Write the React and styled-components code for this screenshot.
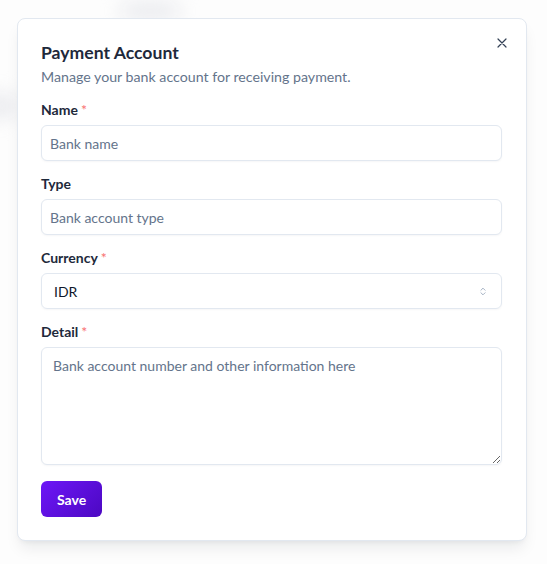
import React from "react";
import styled, { createGlobalStyle } from "styled-components";

const Global = createGlobalStyle`
  html, body { margin: 0; padding: 0; background: #ffffff; }
  body { font-family: Lato, "Noto Sans", sans-serif; color: #0f172a; }
  * { box-sizing: border-box; }
`;

const Page = styled.div`
  position: relative;
  width: 547px;
  height: 564px;
  overflow: hidden;
  background: #fdfdfd;
  padding: 18px 20px 0 17px;
`;

const Blur = styled.div`
  position: absolute;
  border-radius: 20px;
  background: #e9eaee;
  filter: blur(10px);
  left: ${(p) => p.$x}px;
  top: ${(p) => p.$y}px;
  width: ${(p) => p.$w}px;
  height: ${(p) => p.$h}px;
`;

const Card = styled.div`
  position: relative;
  width: 510px;
  background: #ffffff;
  border: 1px solid #e2e8f0;
  border-radius: 8px;
  box-shadow: 0 10px 15px -3px rgba(15, 23, 42, 0.08), 0 4px 6px -4px rgba(15, 23, 42, 0.08);
  padding: 20px 24px 23px 23px;
  display: flex;
  flex-direction: column;
`;

const Close = styled.button`
  position: absolute;
  top: 14px;
  right: 14px;
  width: 20px;
  height: 20px;
  border: none;
  background: transparent;
  padding: 0;
  display: flex;
  align-items: center;
  justify-content: center;
  color: #334155;
  cursor: pointer;
`;

const Title = styled.h2`
  margin: 0;
  font-size: 17.6px;
  line-height: 28px;
  font-weight: 700;
  color: #1e293b;
`;

const Subtitle = styled.p`
  margin: 0;
  font-size: 14.2px;
  line-height: 20px;
  color: #64748b;
`;

const Form = styled.form`
  margin-top: 13px;
  display: flex;
  flex-direction: column;
  gap: 13px;
`;

const Field = styled.div`
  display: flex;
  flex-direction: column;
  gap: 5px;
`;

const Label = styled.label`
  font-size: 14px;
  line-height: 20px;
  font-weight: 700;
  color: #1e293b;
`;

const Req = styled.span`
  color: #f87171;
  margin-left: 3px;
  font-weight: 500;
`;

const Input = styled.input`
  width: 100%;
  height: 36px;
  border: 1px solid #e2e8f0;
  border-radius: 6px;
  padding: 0 8px;
  font: inherit;
  font-size: 14px;
  color: #0f172a;
  background: #fff;
  box-shadow: 0 1px 2px rgba(15, 23, 42, 0.04);
  outline: none;
  &::placeholder { color: #64748b; }
`;

const SelectBox = styled.div`
  width: 100%;
  height: 36px;
  border: 1px solid #e2e8f0;
  border-radius: 6px;
  padding: 0 13px 0 12px;
  display: flex;
  align-items: center;
  justify-content: space-between;
  font-size: 14px;
  color: #0f172a;
  box-shadow: 0 1px 2px rgba(15, 23, 42, 0.04);
`;

const TextArea = styled.textarea`
  width: 100%;
  height: 118px;
  border: 1px solid #e2e8f0;
  border-radius: 6px;
  padding: 8px 11px;
  font: inherit;
  font-size: 14px;
  line-height: 20px;
  color: #0f172a;
  box-shadow: 0 1px 2px rgba(15, 23, 42, 0.04);
  outline: none;
  &::placeholder { color: #64748b; }
`;

const Save = styled.button`
  margin-top: 3px;
  align-self: flex-start;
  height: 36px;
  padding: 0 16px;
  border: none;
  border-radius: 6px;
  background: linear-gradient(135deg, #6d17f7 0%, #4c08c2 100%);
  color: #fff;
  font: inherit;
  font-size: 14px;
  font-weight: 700;
  cursor: pointer;
`;

export default function App() {
  return (
    <>
      <Global />
      <Page>
        <Blur $x={120} $y={2} $w={60} $h={18} />
        <Blur $x={-20} $y={95} $w={40} $h={22} />
        <Card>
          <Close aria-label="Close">
            <svg width="16" height="16" viewBox="0 0 24 24" fill="none" stroke="currentColor" strokeWidth="1.8" strokeLinecap="round">
              <path d="M18 6 6 18M6 6l12 12" />
            </svg>
          </Close>
          <Title>Payment Account</Title>
          <Subtitle>Manage your bank account for receiving payment.</Subtitle>
          <Form onSubmit={(e) => e.preventDefault()}>
            <Field>
              <Label>Name<Req>*</Req></Label>
              <Input placeholder="Bank name" />
            </Field>
            <Field>
              <Label>Type</Label>
              <Input placeholder="Bank account type" />
            </Field>
            <Field>
              <Label>Currency<Req>*</Req></Label>
              <SelectBox>
                <span>IDR</span>
                <svg width="10" height="11" viewBox="0 0 24 24" fill="none" stroke="#94a3b8" strokeWidth="2" strokeLinecap="round" strokeLinejoin="round">
                  <path d="m7 15 5 5 5-5" />
                  <path d="m7 9 5-5 5 5" />
                </svg>
              </SelectBox>
            </Field>
            <Field>
              <Label>Detail<Req>*</Req></Label>
              <TextArea placeholder="Bank account number and other information here" />
            </Field>
            <Save type="submit">Save</Save>
          </Form>
        </Card>
      </Page>
    </>
  );
}
